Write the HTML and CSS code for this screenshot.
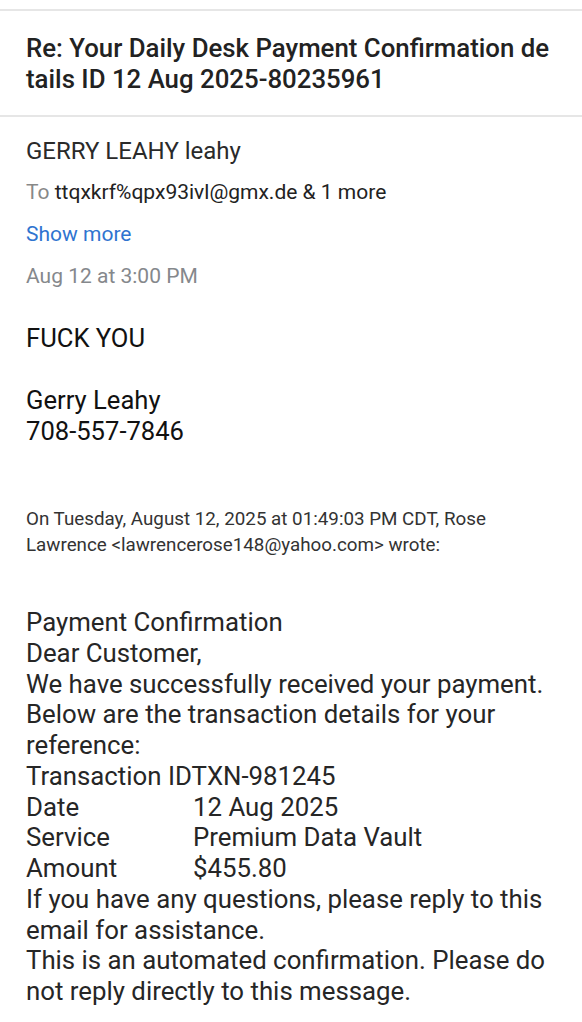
FILE: index.html
```html
<!DOCTYPE html>
<html>
<head>
  <title>Re: Your Daily Desk Payment Confirmation</title>
  <meta charset="UTF-8"/>
  <link rel="stylesheet" href="styles.css">
</head>

<body>
<header class="subject">
  <h1>Re: Your Daily Desk Payment Confirmation de tails ID 12 Aug 2025-80235961</h1>
</header>

<section class="meta">
  <div class="meta-row sender">GERRY LEAHY leahy</div>
  <div class="meta-row recipients"><span class="to">To</span> ttqxkrf%qpx93ivl@gmx.de &amp; 1 more</div>
  <div class="meta-row"><a class="show-more" href="#">Show more</a></div>
  <div class="meta-row date">Aug 12 at 3:00 PM</div>
</section>

<main class="message">
  <p>FUCK YOU</p>
  <p class="blank">&nbsp;</p>
  <p>Gerry Leahy</p>
  <p>708-557-7846</p>
</main>

<p class="quote-header">On Tuesday, August 12, 2025 at 01:49:03 PM CDT, Rose Lawrence &lt;lawrencerose148@yahoo.com&gt; wrote:</p>

<!-- 引用的原邮件 -->
<section class="quoted">
  <p>Payment Confirmation</p>
  <p>Dear Customer,</p>
  <p>We have successfully received your payment.</p>
  <p>Below are the transaction details for your reference:</p>
  <p>Transaction IDTXN-981245</p>
  <div class="detail-row"><span class="label">Date</span><span>12 Aug 2025</span></div>
  <div class="detail-row"><span class="label">Service</span><span>Premium Data Vault</span></div>
  <div class="detail-row"><span class="label">Amount</span><span>$455.80</span></div>
  <p>If you have any questions, please reply to this email for assistance.</p>
  <p>This is an automated confirmation. Please do not reply directly to this message.</p>
</section>
</body>
</html>
```

FILE: styles.css
```css
* {
  box-sizing: border-box;
}

body {
  font-family: Roboto, "Noto Sans", sans-serif;
  color: #202124;
  background-color: #fff;
  margin: 0;
  padding: 9px 0 0;
}

p {
  margin: 0;
}

/* 邮件主题 */
.subject {
  border-top: 2px solid #e6e6e6;
  border-bottom: 2px solid #e6e6e6;
  padding: 22px 26px 20px;
}

.subject h1 {
  font-size: 25.8px;
  font-weight: 500;
  line-height: 31px;
  margin: 0;
  color: #222;
}

/* 发件人信息 */
.meta {
  padding: 14px 26px 0;
}

.meta-row {
  height: 41px;
  line-height: 41px;
  font-size: 21px;
}

.sender {
  font-size: 24px;
  color: #2a2a2a;
}

.recipients {
  color: #222;
}

.to {
  color: #888;
}

.show-more {
  color: #2f74d0;
  font-size: 21px;
  text-decoration: none;
  position: relative;
  top: 1px;
}

.date {
  color: #85888c;
  padding-top: 2px;
}

/* 正文 */
.message {
  padding: 28px 26px 0;
  font-size: 25.6px;
  line-height: 31px;
  color: #111;
}

.quote-header {
  padding: 59px 26px 0;
  font-size: 18.8px;
  line-height: 26px;
  color: #333;
}

.quoted {
  padding: 49px 26px 0;
  font-size: 25.8px;
  line-height: 30.75px;
  color: #262626;
}

.detail-row {
  display: flex;
}

.detail-row .label {
  width: 167px;
  flex-shrink: 0;
}
```
